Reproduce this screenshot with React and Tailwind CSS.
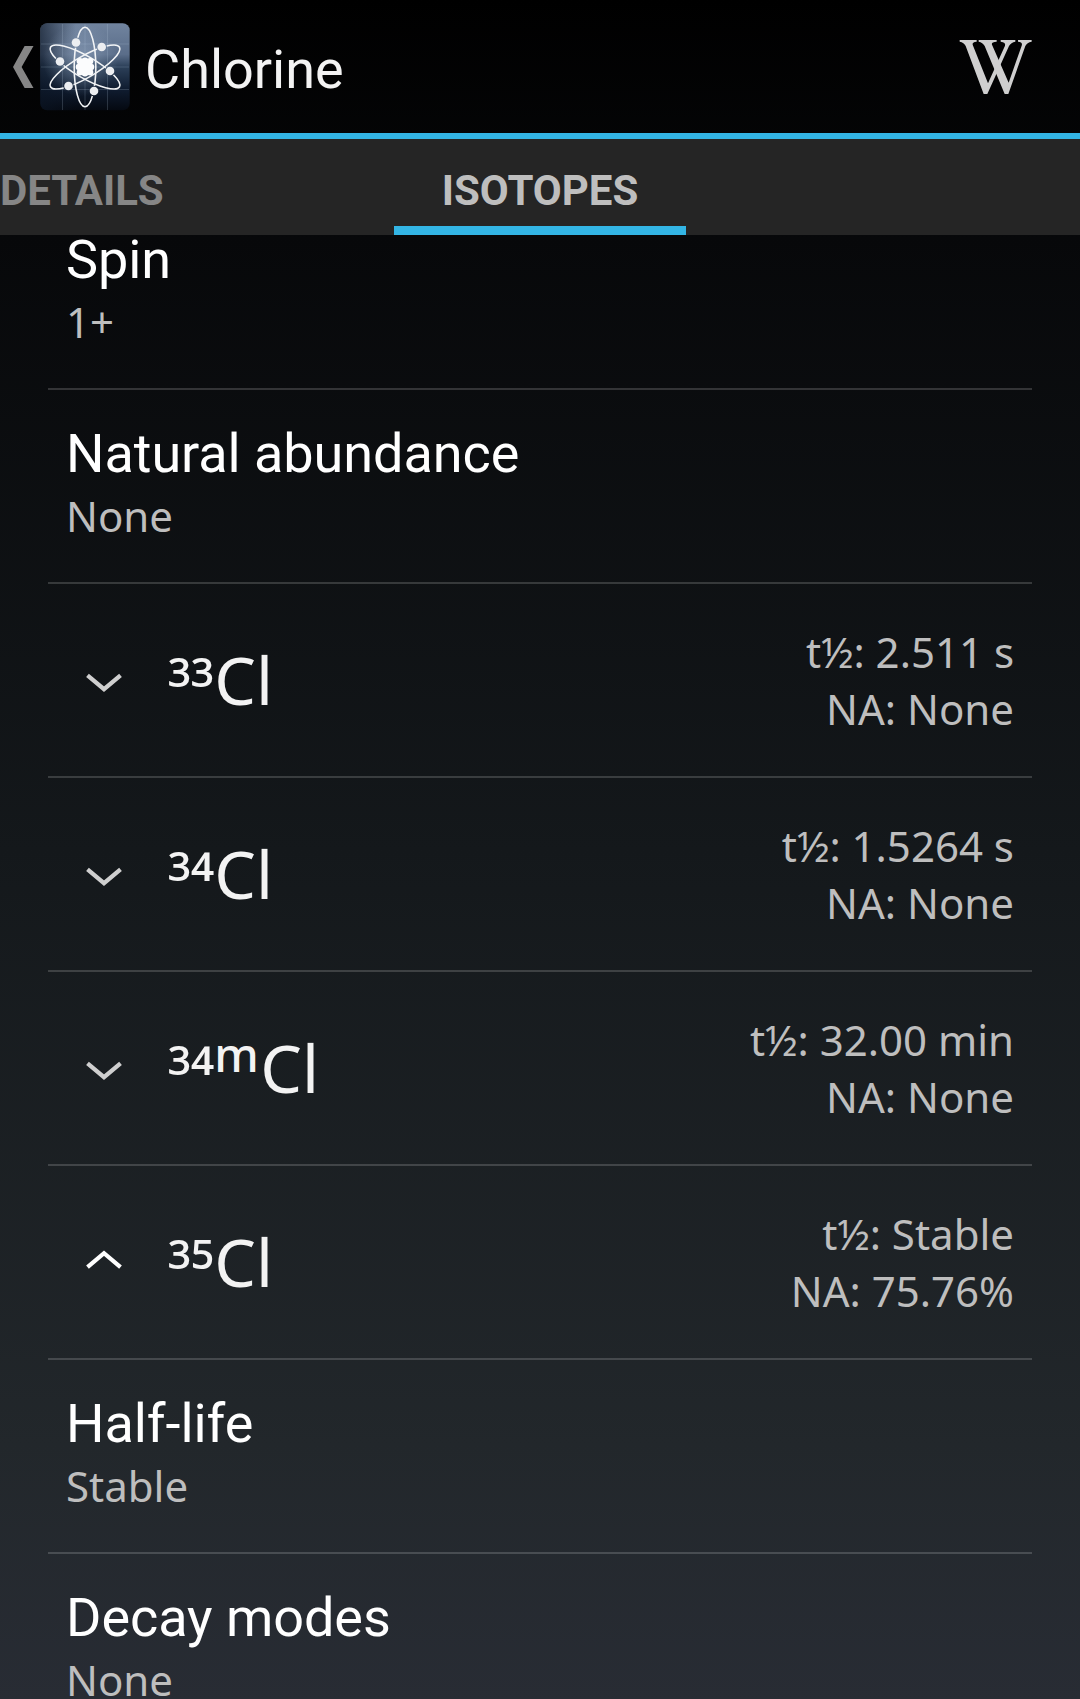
const ELECTRONS = [
  [76, 42.5], [101.7, 47], [60, 61.5], [110, 71], [68.5, 86], [94, 91],
];

const NUCLEONS = [
  [85, 60.8], [80, 61.3], [90, 61.3], [79, 67], [91, 67], [80, 72.3], [90, 72.3], [85, 73.2],
];

function AtomIcon() {
  return (
    <svg className="block h-[88px] w-[90px]" viewBox="40 23 90 88">
      <defs>
        <linearGradient id="sky" x1="0" y1="0" x2="0" y2="1">
          <stop offset="0" stopColor="#71849f" />
          <stop offset="0.36" stopColor="#5a6d89" />
          <stop offset="0.5" stopColor="#2c4059" />
          <stop offset="0.75" stopColor="#101d31" />
          <stop offset="1" stopColor="#050911" />
        </linearGradient>
        <radialGradient id="glow" cx="0.45" cy="0.42" r="0.42">
          <stop offset="0" stopColor="#b4c8e0" stopOpacity="0.42" />
          <stop offset="1" stopColor="#b4c8e0" stopOpacity="0" />
        </radialGradient>
        <linearGradient id="edge" x1="0" y1="0" x2="1" y2="0">
          <stop offset="0" stopColor="#0b1524" stopOpacity="0.65" />
          <stop offset="0.4" stopColor="#0b1524" stopOpacity="0" />
        </linearGradient>
        <mask id="gaps">
          <rect x="40" y="23" width="90" height="88" fill="#fff" />
          {ELECTRONS.map(([x, y]) => (
            <circle key={x} cx={x} cy={y} r="5.2" fill="#000" />
          ))}
        </mask>
      </defs>
      <rect x="40.3" y="23.2" width="89.4" height="87" rx="7" fill="url(#sky)" />
      <rect x="40.3" y="23.2" width="89.4" height="87" rx="7" fill="url(#edge)" />
      <rect x="40.3" y="23.2" width="89.4" height="87" rx="7" fill="url(#glow)" />
      <path d="M62.5 24V110M85 24V110M107.5 24V110M41 44H129M41 67H129M41 89.5H129" stroke="#b9cbe0" strokeOpacity="0.2" strokeWidth="1" />
      <g fill="none" stroke="#f2f4f6" strokeWidth="1.6" mask="url(#gaps)">
        <ellipse cx="85" cy="67" rx="10.8" ry="39.8" />
        <ellipse cx="85" cy="67" rx="10.8" ry="39.8" transform="rotate(60 85 67)" />
        <ellipse cx="85" cy="67" rx="10.8" ry="39.8" transform="rotate(-60 85 67)" />
      </g>
      <g fill="#eceef1">
        {ELECTRONS.map(([x, y]) => (
          <circle key={x} cx={x} cy={y} r="4.3" />
        ))}
      </g>
      <g fill="#fbfcfd">
        {NUCLEONS.map(([x, y]) => (
          <circle key={`${x}-${y}`} cx={x} cy={y} r="3.3" />
        ))}
        <circle cx="85" cy="67" r="7" />
      </g>
    </svg>
  );
}

function WikipediaLogo() {
  return (
    <svg className="block h-[56px] w-[74px]" viewBox="178 117 222 168" fill="#cfcfcf">
      <path d="M180 120H231V125Q217 126 219 134L265 250L316 137Q319 126 303 125V120H347V125Q334 127 328 138L263 282H252L198 138Q193 127 180 125Z" />
      <path d="M237 120H291V125Q274 126 277 134L327 248L366 137Q370 126 355 125V120H396V125Q382 127 377 138L326 282H315L255 138Q249 127 237 125Z" />
    </svg>
  );
}

function Chevron({ up }) {
  return up ? (
    <svg className="-mt-[4px] block h-[20px] w-[36px]" viewBox="0 0 36 20" fill="none" stroke="#ffffff" strokeWidth="4.2">
      <path d="M1.5 17.2L18 3.2L34.5 17.2" />
    </svg>
  ) : (
    <svg className="mt-[6px] block h-[20px] w-[36px]" viewBox="0 0 36 20" fill="none" stroke="#cfcfcf" strokeWidth="4.2">
      <path d="M1.5 2.3L18 16.2L34.5 2.3" />
    </svg>
  );
}

function Detail({ label, value }) {
  return (
    <div className="h-[194px] shrink-0 border-b-2 border-white/17 pt-[32px] pl-[18px]">
      <div className="font-[Roboto] text-[54px] leading-[64px] tracking-[-0.06px] text-white">{label}</div>
      <div className="mt-px text-[42px] leading-[57px] text-[#bebebe]">{value}</div>
    </div>
  );
}

function Isotope({ mass, meta, halfLife, abundance, open }) {
  return (
    <div className="flex h-[194px] shrink-0 items-center border-b-2 border-white/17 pr-[18px] pl-[38px]">
      <Chevron up={open} />
      <div className="-mt-[2px] ml-[46px] h-[90px] text-[66px] leading-[90px] text-[#f3f3f3]">
        <span className="align-[-9px] leading-none">{mass}</span>
        {meta && <span className="align-[21px] text-[47px] leading-none font-medium tracking-[1.5px]">m</span>}
        Cl
      </div>
      <div className="ml-auto text-right text-[42px] leading-[57px] text-[#bebebe]">
        <div>t½: {halfLife}</div>
        <div>NA: {abundance}</div>
      </div>
    </div>
  );
}

export default function App() {
  return (
    <div className="flex h-[1699px] w-[1080px] flex-col overflow-hidden bg-[linear-gradient(to_bottom,#000000_0%,#07080a_14%,#14181b_50%,#22272b_85%,#282c34_100%)] font-['Noto_Sans',sans-serif]">
      <header className="flex h-[139px] shrink-0 items-center border-b-[6px] border-[#33b5e5] pr-[47px] pl-[12px]">
        <svg className="block h-[42px] w-[22px]" viewBox="0 0 22 42" fill="#868686">
          <path d="M12.6 0H21.5L9.6 21L21.5 42H12.6L1 21Z" />
        </svg>
        <div className="ml-[6px]"><AtomIcon /></div>
        <h1 className="mt-[7px] ml-[15px] font-[Roboto] text-[54px] leading-[64px] text-[#f3f3f3]">Chlorine</h1>
        <div className="ml-auto"><WikipediaLogo /></div>
      </header>
      <nav className="grid h-[96px] shrink-0 grid-cols-[394px_292px_1fr] bg-[#252525] font-[Roboto] text-[42px] leading-[49px] font-bold">
        <div className="pt-[27px] tracking-[-0.1px] text-[#868686]">DETAILS</div>
        <div className="border-b-[9px] border-[#33b5e5] pt-[27px] text-center text-[#bebebe]">ISOTOPES</div>
      </nav>
      <main className="flex min-h-0 flex-1 flex-col overflow-hidden px-[48px]">
        <div className="-mt-[39px] flex flex-col">
          <Detail label="Spin" value="1+" />
          <Detail label="Natural abundance" value="None" />
          <Isotope mass="³³" halfLife="2.511 s" abundance="None" />
          <Isotope mass="³⁴" halfLife="1.5264 s" abundance="None" />
          <Isotope mass="³⁴" meta halfLife="32.00 min" abundance="None" />
          <Isotope mass="³⁵" halfLife="Stable" abundance="75.76%" open />
          <Detail label="Half-life" value="Stable" />
          <Detail label="Decay modes" value="None" />
        </div>
      </main>
    </div>
  );
}
